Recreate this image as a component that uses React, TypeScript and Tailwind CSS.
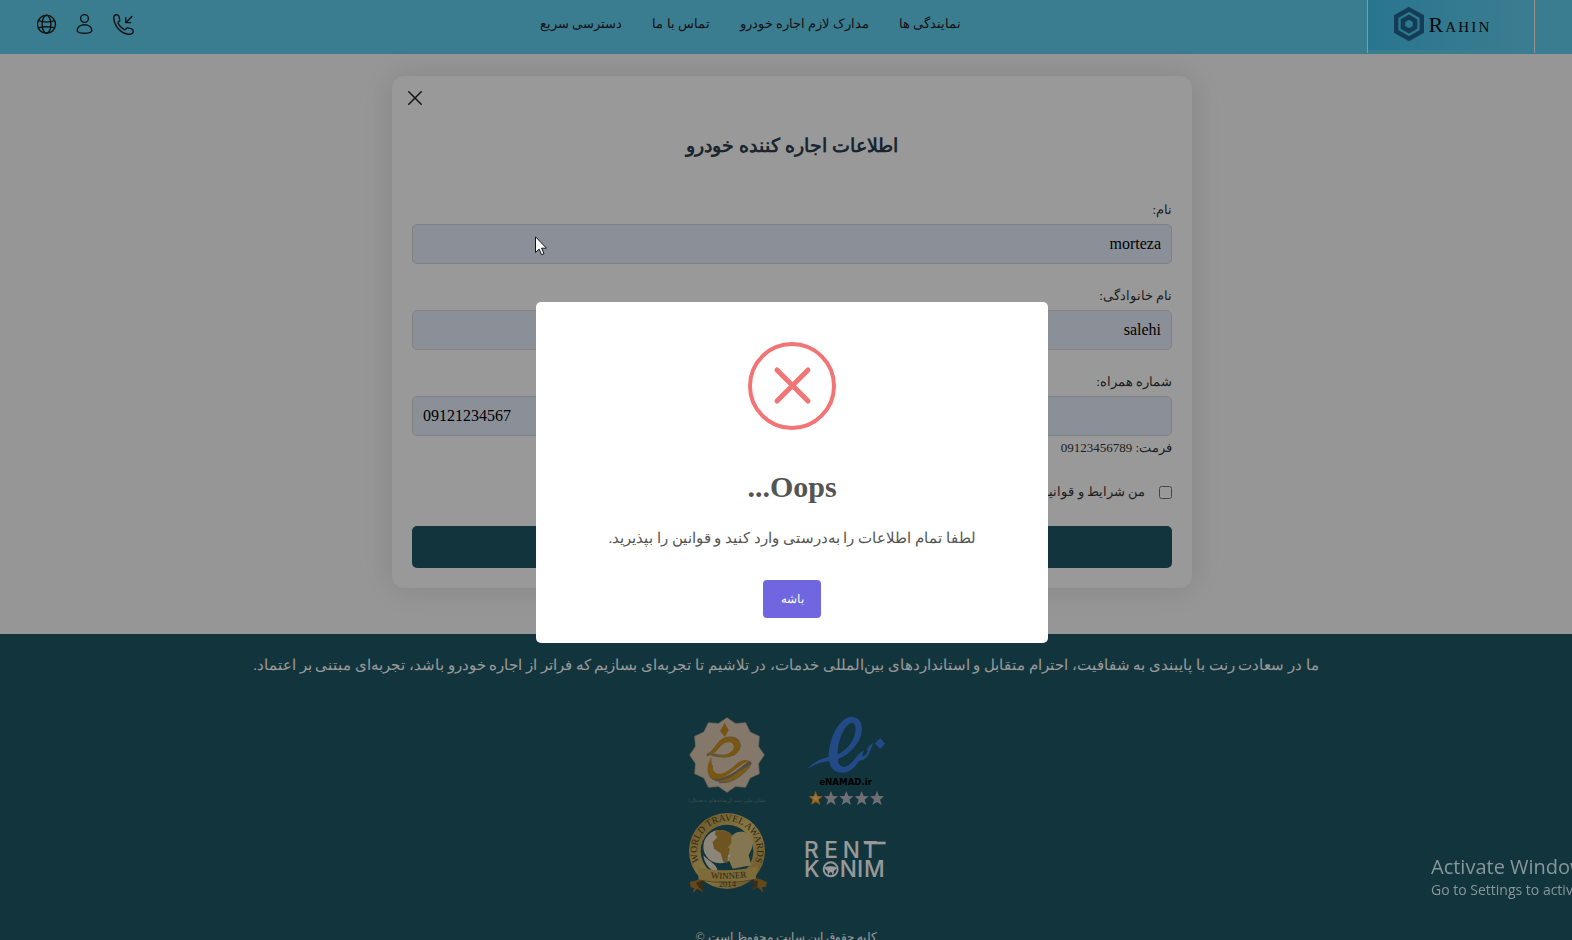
import React from "react";

const navLinks = ["نمایندگی ها", "مدارک لازم اجاره خودرو", "تماس با ما", "دسترسی سریع"];

function GlobeIcon() {
  return (
    <svg viewBox="0 0 20 20" className="h-5 w-5" fill="none" stroke="currentColor" strokeWidth="1.4">
      <circle cx="9.5" cy="10.300" r="9" />
      <ellipse cx="9.5" cy="10.300" rx="4.4" ry="9" />
      <path d="M1.300 6.700C6 8.300 13 8.300 17.700 6.700M1.300 13.900C6 12.500 13 12.500 17.700 13.900" />
    </svg>
  );
}

function UserIcon() {
  return (
    <svg viewBox="0 0 20 20" className="h-5 w-5" fill="none" stroke="currentColor" strokeWidth="1.4">
      <circle cx="9.5" cy="4.5" r="3.9" />
      <path d="M2.200 16.600C2.200 13 5.500 10.700 9.500 10.700s7.300 2.300 7.300 5.900c0 1.800-1.800 2.700-7.300 2.700s-7.300-.9-7.300-2.700Z" />
    </svg>
  );
}

function PhoneIcon() {
  return (
    <svg viewBox="0 0 21 21" className="h-[21px] w-[21px]" fill="none" stroke="currentColor" strokeWidth="1.4" strokeLinecap="round" strokeLinejoin="round">
      <path d="M.8 3.200C.8 1.500 1.900.8 3.600.8c1.600 0 2.200.5 2.400 1.900.2 1.700 1 2.700.7 3.900-.3 1-1.900 1.200-1.700 2.300.4 1.900 4.200 6.300 6.700 6.800 1.200.2 1.200-1.300 2.200-1.700 1-.4 2.600.2 4.100.6 1.500.4 2.200 1 2.200 2.500 0 1.800-.7 3.100-3.300 3.100C8.600 20.200.8 12.500.8 3.200Z" />
      <path d="M18.900 2.600 12.900 8.400M12.700 3.600v5h5" />
    </svg>
  );
}

function HexIcon() {
  return (
    <svg viewBox="0 0 30 34" className="h-[34px] w-[30px]" fill="none" stroke="#22658f">
      <path d="M15 2.300 27.800 9.600v14.800L15 31.700 2.200 24.400V9.600Z" strokeWidth="4.400" />
      <path d="M15 10.200 21 13.600v6.800L15 23.800 9 20.400v-6.800Z" strokeWidth="4.600" />
    </svg>
  );
}

function SamandehiBadge() {
  const points = Array.from({ length: 24 }, (_, i) => {
    const r = i % 2 === 0 ? 112 : 98;
    const a = (i * Math.PI) / 12 - Math.PI / 2;
    return `${(171 + r * Math.cos(a)).toFixed(1)},${(165 + r * Math.sin(a)).toFixed(1)}`;
  }).join(" ");
  return (
    <svg viewBox="48 48 246 270" className="h-[90px] w-[82px]" role="img" aria-label="نشان ملی ثبت">
      <polygon points={points} fill="#dcc9b3" stroke="#b9a895" strokeWidth="2" />
      <g fill="none" strokeLinecap="round">
        <path d="M122 200c-8 30 16 46 50 34 24-8 42-26 66-44" stroke="#8d8165" strokeWidth="13" />
        <path d="M150 246c30 4 62-18 88-48" stroke="#968a70" strokeWidth="7" />
        <path d="M114 164c24-6 30-48 62-50 30-2 40 22 24 40-18 18-50 16-72 10" stroke="#968a70" strokeWidth="9" />
      </g>
      <path d="M164 68 176 90 165 110 150 94Z" fill="#c98c20" />
      <path d="M110 166c24-8 28-50 60-54 34-4 50 20 36 40-16 22-54 24-74 14 28 2 50-4 58-20 6-16-10-24-26-16-20 10-24 36-54 36Z" fill="#cb8f22" />
      <path d="M124 170c-20 36-14 70 20 66 34-4 56-40 94-54-16-6-34 4-48 18-20 18-44 28-56 16-8-8-10-28-10-46Z" fill="#cb8f22" />
      <path d="M148 242c36 0 54-32 94-46-16 20-54 62-94 46Z" fill="#cf962c" />
      <text x="171" y="305" textAnchor="middle" className="font-['DejaVu_Sans'] text-[16px]" fill="#6c7f83">
        نشان ملی ثبت (رسانه‌های دیجیتال)
      </text>
    </svg>
  );
}

const starXs = [437, 483, 529, 575, 621];

function EnamadBadge() {
  return (
    <svg viewBox="408 48 240 270" className="h-[90px] w-20" role="img" aria-label="eNAMAD">
      <path
        fill="#377ce0"
        fillRule="evenodd"
        d="M411 208C430 186 452 176 476 170C476 116 508 50 546 50C576 52 582 84 570 114C558 142 532 168 504 177C504 194 512 202 524 200C538 197 548 186 556 174C562 166 572 154 582 152C578 160 574 168 580 168C588 164 592 158 594 152C584 150 600 134 610 129C606 138 602 150 598 160C592 172 582 182 568 182C556 200 540 220 514 218C492 216 480 202 478 184C452 186 432 194 411 208ZM503 163C528 152 547 130 554 106C560 84 556 68 546 68C524 72 504 118 503 163Z"
      />
      <path d="M631 114 645 131 630 147 615 130Z" fill="#377ce0" />
      <text x="527" y="256" textAnchor="middle" className="font-['DejaVu_Sans'] text-[26px] font-bold [direction:ltr]" fill="#000">
        eNAMAD.ir
      </text>
      {starXs.map((x, i) => (
        <path
          key={x}
          transform={`translate(${x} 295)`}
          d="M0-22 6-7 21-6 9 4 14 20 0 11-14 20-9 4-21-6-6-7Z"
          fill={i === 0 ? "#f8a021" : "#b9b9bd"}
        />
      ))}
      <path d="M437 282 441 291 449 292 442 297 445 305 437 300 429 305 432 297 425 292 433 291Z" fill="#ffc878" />
    </svg>
  );
}

function TravelAwardBadge() {
  return (
    <svg viewBox="48 36 246 246" className="h-[82px] w-[82px] [direction:ltr]" role="img" aria-label="World Travel Awards Winner 2014">
      <defs>
        <path id="award-arc" d="M93 198A90 90 0 1 1 249 198" />
        <path id="ribbon-arc" d="M104 233Q176 242 248 229" />
        <linearGradient id="award-gold" x1="0" y1="0" x2="1" y2="1">
          <stop offset="0" stopColor="#b08c3a" />
          <stop offset="0.5" stopColor="#e2c777" />
          <stop offset="1" stopColor="#a9873a" />
        </linearGradient>
      </defs>
      <circle cx="171" cy="153" r="114" fill="url(#award-gold)" />
      <circle cx="171" cy="153" r="79" fill="#1e5764" />
      <circle cx="150" cy="140" r="50" fill="#e8e0c8" />
      <path d="M138 92c20-6 44 4 54 22l-8 18 4 18-14 16-2 22-12-2-8-26-20-14-4-20 14-14-8-10Z" fill="#b68d37" />
      <path d="M184 112c8-20 46-24 60 0 12 22-2 40-8 54l8 30-56 10-14-32c6-4 8-4 10-6l-8-10 4-10-6-6 10-12Z" fill="#dcc588" />
      <path d="M100 166c16 18 34 22 42 42l-4 8c-18-6-34-22-38-50Z" fill="#e8e0c8" />
      <text className="font-['Liberation_Serif'] text-[29px]" fill="#54431b">
        <textPath href="#award-arc" startOffset="50%" textAnchor="middle">WORLD TRAVEL AWARDS</textPath>
      </text>
      <path d="M59 246 92 238 98 276 82 266 68 280 72 264 62 262ZM291 246 254 232 248 270 264 262 280 278 276 262 288 260Z" fill="#a8772f" />
      <path d="M82 202Q171 222 266 198L256 238Q171 256 86 240Z" fill="#d1b25f" />
      <path d="M86 240Q171 256 256 238" fill="none" stroke="#7c6124" strokeWidth="2" />
      <path d="M78 248 98 240 98 274 86 262ZM264 242 248 242 250 270 262 260Z" fill="#6a4a22" />
      <text className="font-['Liberation_Serif'] text-[27px]" fill="#54431b">
        <textPath href="#ribbon-arc" startOffset="50%" textAnchor="middle">WINNER</textPath>
      </text>
      <text x="172" y="262" textAnchor="middle" className="font-['Liberation_Serif'] text-[26px]" fill="#54431b">
        2014
      </text>
    </svg>
  );
}

function RentKonimLogo() {
  return (
    <svg viewBox="405 36 246 246" className="h-[82px] w-[82px] [direction:ltr]" role="img" aria-label="Rent Konim">
      <g fill="#fff" className="font-['Inter'] text-[68px] font-medium">
        <text x="405" y="175">R</text>
        <text x="466" y="175">E</text>
        <text x="521" y="175">N</text>
        <text x="581" y="175">T</text>
        <text x="405" y="232">K</text>
        <text x="512" y="232">N</text>
        <text x="564" y="232">I</text>
        <text x="585" y="232">M</text>
      </g>
      <path d="M586 129H650" stroke="#fff" strokeWidth="8" />
      <circle cx="485" cy="208" r="21" fill="none" stroke="#fff" strokeWidth="6" />
      <path d="M465 203q20-8 40 0l-10 10-3 14-4-10h-6l-4 10-3-14Z" fill="#fff" />
    </svg>
  );
}

type FieldProps = {
  id: string;
  label: string;
  value: string;
  type?: string;
  ltr?: boolean;
};

function Field({ id, label, value, type = "text", ltr = false }: FieldProps) {
  return (
    <div>
      <label htmlFor={id} className="block pb-1 text-[13px] leading-5 text-[#333]">
        {label}
      </label>
      <input
        id={id}
        type={type}
        dir={ltr ? "ltr" : "rtl"}
        defaultValue={value}
        className="block h-10 w-full rounded-[5px] border border-[#d8d8d8] bg-[#e8f0fe] px-2.5 text-base text-black outline-none"
      />
    </div>
  );
}

function Header() {
  return (
    <header className="flex h-[54px] shrink-0 items-start justify-between bg-[#62cff0] px-[37px]">
      <a href="#home" className="flex h-[53px] w-[168px] items-start justify-end border-x border-[#f5f5f5]">
        <span className="flex h-[50px] w-[150px] items-start justify-center gap-1 bg-linear-to-r from-[#43c4ef] to-[#62cff0] pt-[7px]" dir="ltr">
          <HexIcon />
          <span className="text-[22px] leading-[36px] tracking-widest text-[#0b1114] [font-variant:small-caps]">Rahin</span>
        </span>
      </a>
      <nav className="flex h-12 items-center gap-[30px] text-[13px] text-[#222]">
        {navLinks.map((t) => (
          <a key={t} href="#nav" className="whitespace-nowrap">
            {t}
          </a>
        ))}
      </nav>
      <div className="flex h-12 items-center gap-[18px] text-[#222]">
        <button aria-label="تماس"><PhoneIcon /></button>
        <button aria-label="حساب کاربری"><UserIcon /></button>
        <button aria-label="زبان"><GlobeIcon /></button>
      </div>
    </header>
  );
}

function RenterForm() {
  return (
    <form className="w-full max-w-[800px] rounded-xl bg-white px-5 pb-5 shadow-[0_0_30px_rgba(0,0,0,0.12)]" onSubmit={(e) => e.preventDefault()}>
      <div className="flex h-11 items-center justify-end">
        <button type="button" aria-label="بستن" className="-ml-1 text-[#222]">
          <svg viewBox="0 0 14 14" className="h-3.5 w-3.5" stroke="currentColor" strokeWidth="1.5" strokeLinecap="round">
            <path d="M.8.8 13.200 13.200M13.200.8.8 13.200" />
          </svg>
        </button>
      </div>
      <h2 className="mt-3 mb-10 text-center text-[19px] leading-7 font-bold text-[#2c3e50]">اطلاعات اجاره کننده خودرو</h2>
      <div className="flex flex-col gap-[22px]">
        <Field id="first" label="نام:" value="morteza" />
        <Field id="last" label="نام خانوادگی:" value="salehi" />
        <Field id="phone" label="شماره همراه:" value="09121234567" type="tel" ltr />
      </div>
      <p className="mt-0.5 text-[13px] leading-5 text-[#333]">فرمت: 09123456789</p>
      <div className="mt-[22px] mb-[22px] flex h-6 items-center gap-3.5">
        <input id="terms" type="checkbox" className="h-[13px] w-[13px]" />
        <label htmlFor="terms" className="text-[13px] text-[#333]">
          من شرایط و قوانین را می‌پذیرم
        </label>
      </div>
      <button type="submit" aria-label="ثبت" className="block h-[42px] w-full rounded-[5px] bg-[#1e5764]" />
    </form>
  );
}

function Footer() {
  return (
    <footer className="flex flex-1 flex-col items-center bg-[#1e5764] pt-[15px] text-white">
      <p className="text-[15px] leading-8 whitespace-nowrap">
        ما در سعادت رنت با پایبندی به شفافیت، احترام متقابل و استانداردهای بین‌المللی خدمات، در تلاشیم تا تجربه‌ای بسازیم که فراتر از اجاره خودرو باشد، تجربه‌ای مبتنی بر اعتماد.
      </p>
      <div className="mt-[35px] grid grid-cols-2 items-center gap-x-9 gap-y-1.5">
        <EnamadBadge />
        <SamandehiBadge />
        <RentKonimLogo />
        <TravelAwardBadge />
      </div>
      <p className="mt-[31px] text-xs leading-6 whitespace-nowrap">کلیه حقوق این سایت محفوظ است ©</p>
    </footer>
  );
}

function ErrorDialog() {
  return (
    <div className="fixed inset-0 flex items-center justify-center bg-black/40 pt-[5px] pl-3">
      <div role="alertdialog" aria-labelledby="dlg-title" aria-describedby="dlg-text" className="flex w-full max-w-[512px] flex-col items-center rounded-[5px] bg-white pt-10 pb-[25px] text-[#545454]">
        <svg viewBox="0 0 88 88" className="h-[88px] w-[88px]" fill="none" stroke="#f27474">
          <circle cx="44" cy="44" r="42" strokeWidth="4" />
          <path d="M29 28 60 59M60 28 29 59" strokeWidth="5" strokeLinecap="round" />
        </svg>
        <h2 id="dlg-title" className="mt-[39px] text-[30px] leading-9 font-bold">Oops...</h2>
        <p id="dlg-text" className="mt-[17px] text-[15px] leading-8">لطفا تمام اطلاعات را به‌درستی وارد کنید و قوانین را بپذیرید.</p>
        <button className="mt-[26px] h-[38px] w-[58px] rounded bg-[#7066e0] text-xs text-white">باشه</button>
      </div>
    </div>
  );
}

export default function App() {
  return (
    <div dir="rtl" className="relative flex h-screen flex-col overflow-hidden bg-[#fafafa] font-['Liberation_Serif',serif]">
      <Header />
      <main className="flex shrink-0 justify-center pt-[22px] pb-[46px] pl-3">
        <RenterForm />
      </main>
      <Footer />
      <ErrorDialog />
      <svg viewBox="0 0 12 20" className="absolute top-[236px] left-[535px] h-5 w-3" fill="#fff" stroke="#10131c" strokeWidth="1">
        <path d="M.5.8v15.700l3.600-3.400 2.500 5.600 2.400-1-2.400-5.500h4.900Z" />
      </svg>
      <div dir="ltr" className="absolute top-[854px] left-[1431px] font-['Open_Sans',sans-serif] whitespace-nowrap text-[#87979b]">
        <p className="text-xl leading-[26px]">Activate Windows</p>
        <p className="text-sm leading-5">Go to Settings to activate Windows.</p>
      </div>
    </div>
  );
}
